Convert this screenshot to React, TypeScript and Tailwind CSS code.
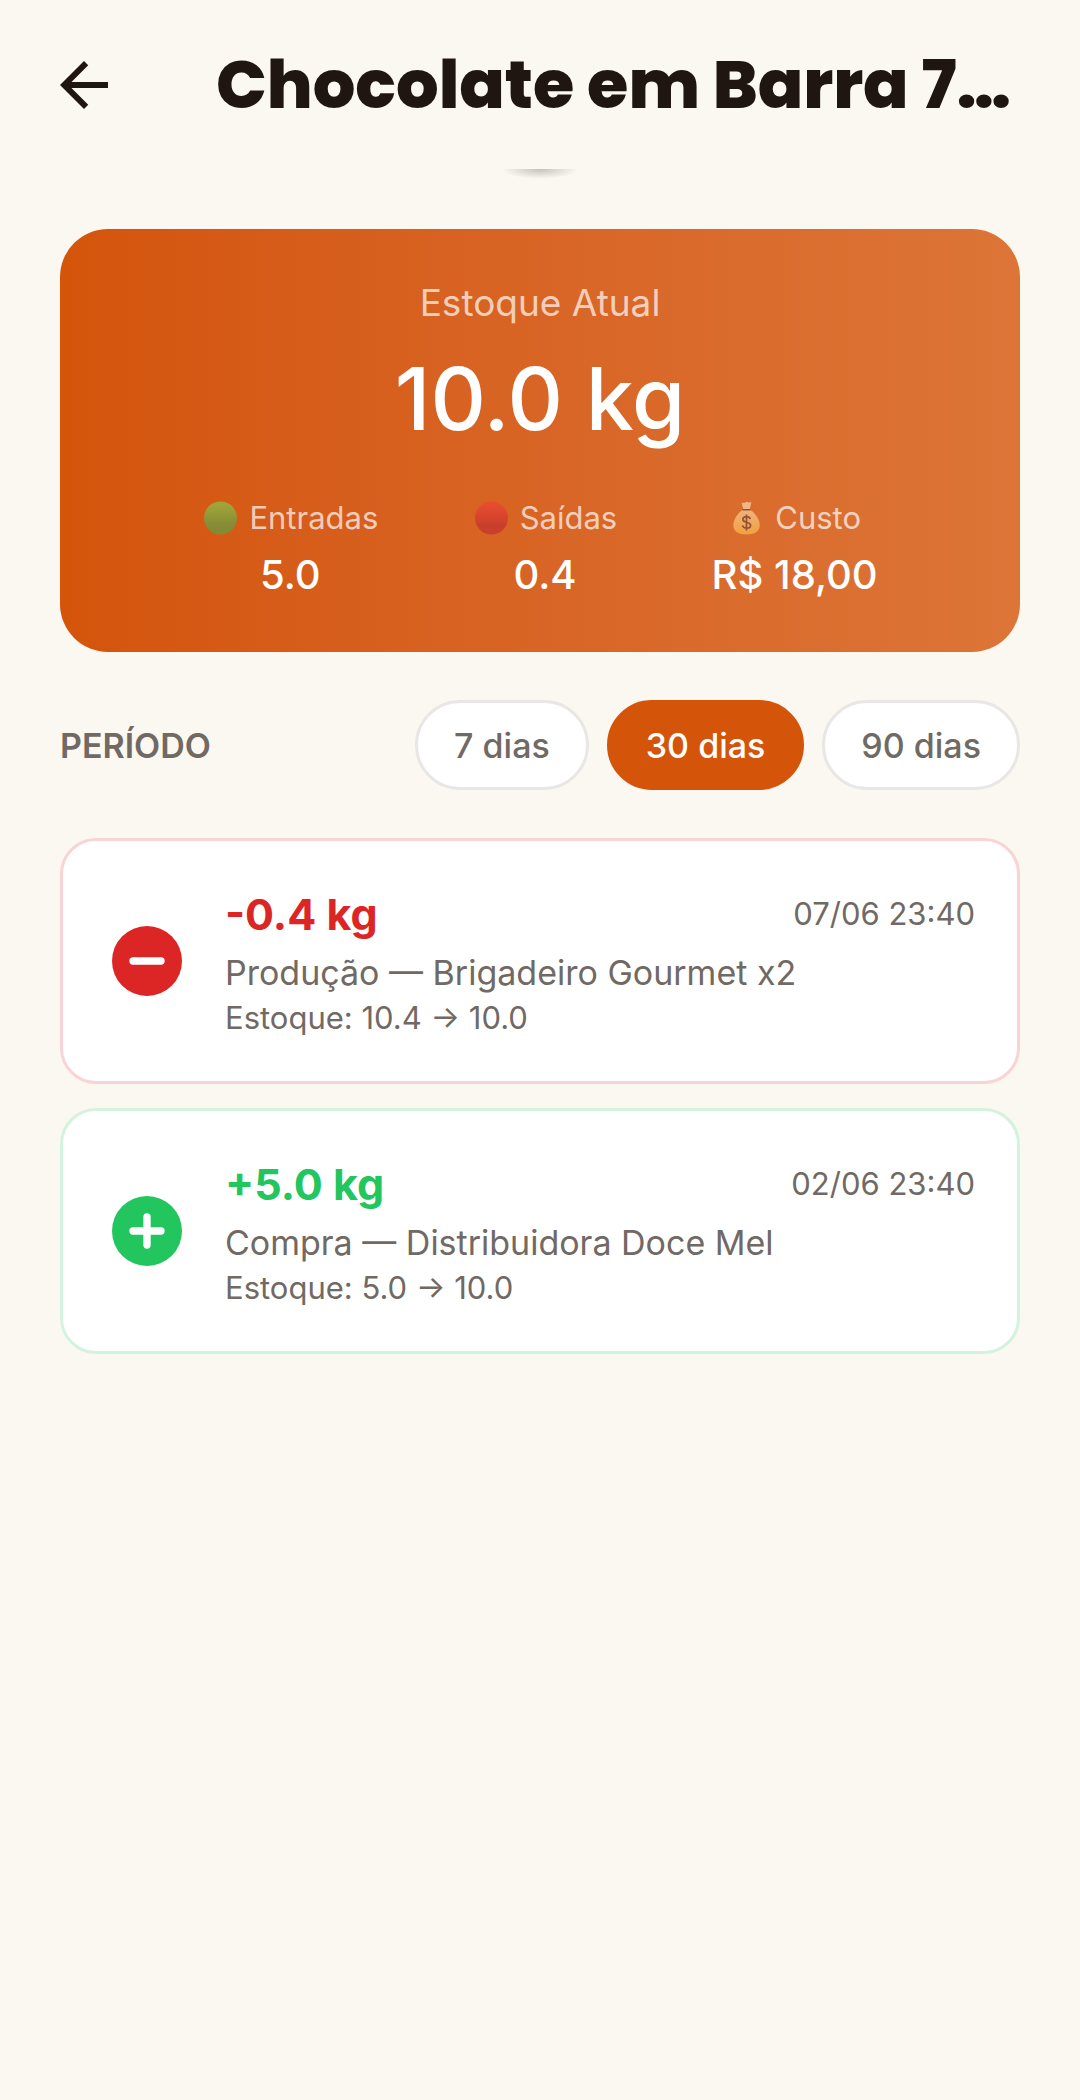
import { useState } from 'react';
import type { ReactNode } from 'react';
import clsx from 'clsx';
import { MdArrowBack } from 'react-icons/md';

type Movement = {
  id: number;
  type: 'in' | 'out';
  amount: string;
  date: string;
  description: string;
  stock: string;
};

const periods = [7, 30, 90];

const movements: Movement[] = [
  {
    id: 1,
    type: 'out',
    amount: '-0.4 kg',
    date: '07/06 23:40',
    description: 'Produção — Brigadeiro Gourmet x2',
    stock: 'Estoque: 10.4 → 10.0',
  },
  {
    id: 2,
    type: 'in',
    amount: '+5.0 kg',
    date: '02/06 23:40',
    description: 'Compra — Distribuidora Doce Mel',
    stock: 'Estoque: 5.0 → 10.0',
  },
];

function Dot({ id, from, to }: { id: string; from: string; to: string }) {
  return (
    <svg viewBox="0 0 37 34" className="h-[34px] w-[37px]" aria-hidden="true">
      <defs>
        <linearGradient id={id} x1="0" y1="0" x2="0" y2="1">
          <stop offset="0.1" stopColor={from} />
          <stop offset="0.75" stopColor={to} />
        </linearGradient>
      </defs>
      <circle cx="18.5" cy="17" r="16.5" fill={`url(#${id})`} />
    </svg>
  );
}

function MoneyBag() {
  return (
    <svg viewBox="0 0 37 34" className="h-[34px] w-[37px]" aria-hidden="true">
      <defs>
        <linearGradient id="bag" x1="0" y1="0" x2="0" y2="1">
          <stop offset="0" stopColor="#efb27c" />
          <stop offset="1" stopColor="#f2a040" />
        </linearGradient>
      </defs>
      <path
        d="M14.6 9h7.8c5 3.3 9.3 9.4 9.3 15.3 0 6.2-5.2 9.2-13.2 9.2S5.3 30.5 5.3 24.3C5.3 18.4 9.6 12.3 14.6 9z"
        fill="url(#bag)"
      />
      <path d="M13.6 1.5l2.5.6 2.4-1.4 2.4.9 2.5-.3-1.6 6.700h-6.600z" fill="#efb785" />
      <path d="M15 8.800h7" stroke="#935237" strokeWidth="1.4" strokeLinecap="round" />
      <path
        d="M22.3 18c-.6-1.7-2-2.3-3.8-2.3-2 0-3.6.9-3.6 2.7 0 3.9 7.7 1.7 7.7 5.8 0 2-1.7 3-4 3-2.2 0-3.7-.9-4.2-2.8M18.500 13.600v15.800"
        fill="none"
        stroke="#935237"
        strokeWidth="1.7"
      />
    </svg>
  );
}

function Stat({ icon, label, value }: { icon: ReactNode; label: string; value: string }) {
  return (
    <div className="flex flex-col items-center">
      <dt className="flex items-center gap-2.5 text-[31px] leading-12 text-white/70">
        {icon}
        {label}
      </dt>
      <dd className="mt-1 text-[40px] leading-[58px] font-medium">{value}</dd>
    </div>
  );
}

function MovementCard({ movement }: { movement: Movement }) {
  const isOut = movement.type === 'out';

  return (
    <li
      className={clsx(
        'flex items-center gap-9 rounded-[36px] border-3 bg-white p-[42px]',
        isOut ? 'border-[#f8d4d4]' : 'border-[#d3f3df]'
      )}
    >
      <svg viewBox="0 0 24 24" className="size-[84px] shrink-0" aria-hidden="true">
        <circle cx="12" cy="12" r="10" fill={isOut ? '#dc2626' : '#22c55e'} />
        <path
          d={isOut ? 'M8 12h8' : 'M8 12h8M12 8v8'}
          stroke="#fff"
          strokeWidth="2.1"
          strokeLinecap="round"
        />
      </svg>
      <div className="min-w-0 flex-1">
        <div className="mb-1 flex items-center justify-between">
          <strong
            className={clsx(
              'text-[43px] leading-[62px] font-bold',
              isOut ? 'text-[#dc2626]' : 'text-[#22c55e]'
            )}
          >
            {movement.amount}
          </strong>
          <time className="text-[31px] leading-11">{movement.date}</time>
        </div>
        <p className="text-[34px] leading-12">{movement.description}</p>
        <p className="text-[31px] leading-[42px]">{movement.stock}</p>
      </div>
    </li>
  );
}

export default function App() {
  const [period, setPeriod] = useState(30);

  return (
    <div className="min-h-screen bg-[#fbf8f1] font-['Inter',sans-serif] text-[#706964]">
      <header className="flex h-[169px] items-center px-12 text-[#1f1611]">
        <button type="button" aria-label="Voltar" className="shrink-0">
          <MdArrowBack className="size-[72px]" />
        </button>
        <h1 className="ml-24 flex-1 truncate font-['Poppins','Inter',sans-serif] text-[67px] leading-[98px] font-extrabold">
          Chocolate em Barra 7…
        </h1>
      </header>

      {/* edge of the pull-to-refresh shadow */}
      <div className="flex h-[60px] justify-center overflow-hidden">
        <div className="h-2.5 w-[78px] bg-[radial-gradient(ellipse_at_top,rgba(0,0,0,0.22),transparent_70%)]" />
      </div>

      <main className="px-[60px]">
        <section className="rounded-[48px] bg-linear-to-r from-[#d4540a] to-[#dc7537] p-12 text-center text-white">
          <h2 className="text-[37px] leading-[52px] text-white/70">Estoque Atual</h2>
          <p className="mt-3 text-[86px] leading-[117px] font-medium">10.0 kg</p>
          <dl className="mt-9 flex justify-evenly">
            <Stat
              icon={<Dot id="dot-in" from="#9fa53a" to="#858a35" />}
              label="Entradas"
              value="5.0"
            />
            <Stat
              icon={<Dot id="dot-out" from="#e84c30" to="#c83f2b" />}
              label="Saídas"
              value="0.4"
            />
            <Stat icon={<MoneyBag />} label="Custo" value="R$ 18,00" />
          </dl>
        </section>

        <div className="mt-12 flex items-center justify-between">
          <span id="period-label" className="text-[34px] font-semibold">
            PERÍODO
          </span>
          <div role="group" aria-labelledby="period-label" className="flex gap-[18px]">
            {periods.map((days) => (
              <button
                key={days}
                type="button"
                aria-pressed={period === days}
                onClick={() => setPeriod(days)}
                className={clsx(
                  'h-[90px] rounded-full border-3 px-9 text-[34px] font-medium',
                  period === days
                    ? 'border-[#d4540a] bg-[#d4540a] text-white'
                    : 'border-[#e8e7e5] bg-white'
                )}
              >
                {days} dias
              </button>
            ))}
          </div>
        </div>

        <ul className="mt-12 flex flex-col gap-6">
          {movements.map((movement) => (
            <MovementCard key={movement.id} movement={movement} />
          ))}
        </ul>
      </main>
    </div>
  );
}
